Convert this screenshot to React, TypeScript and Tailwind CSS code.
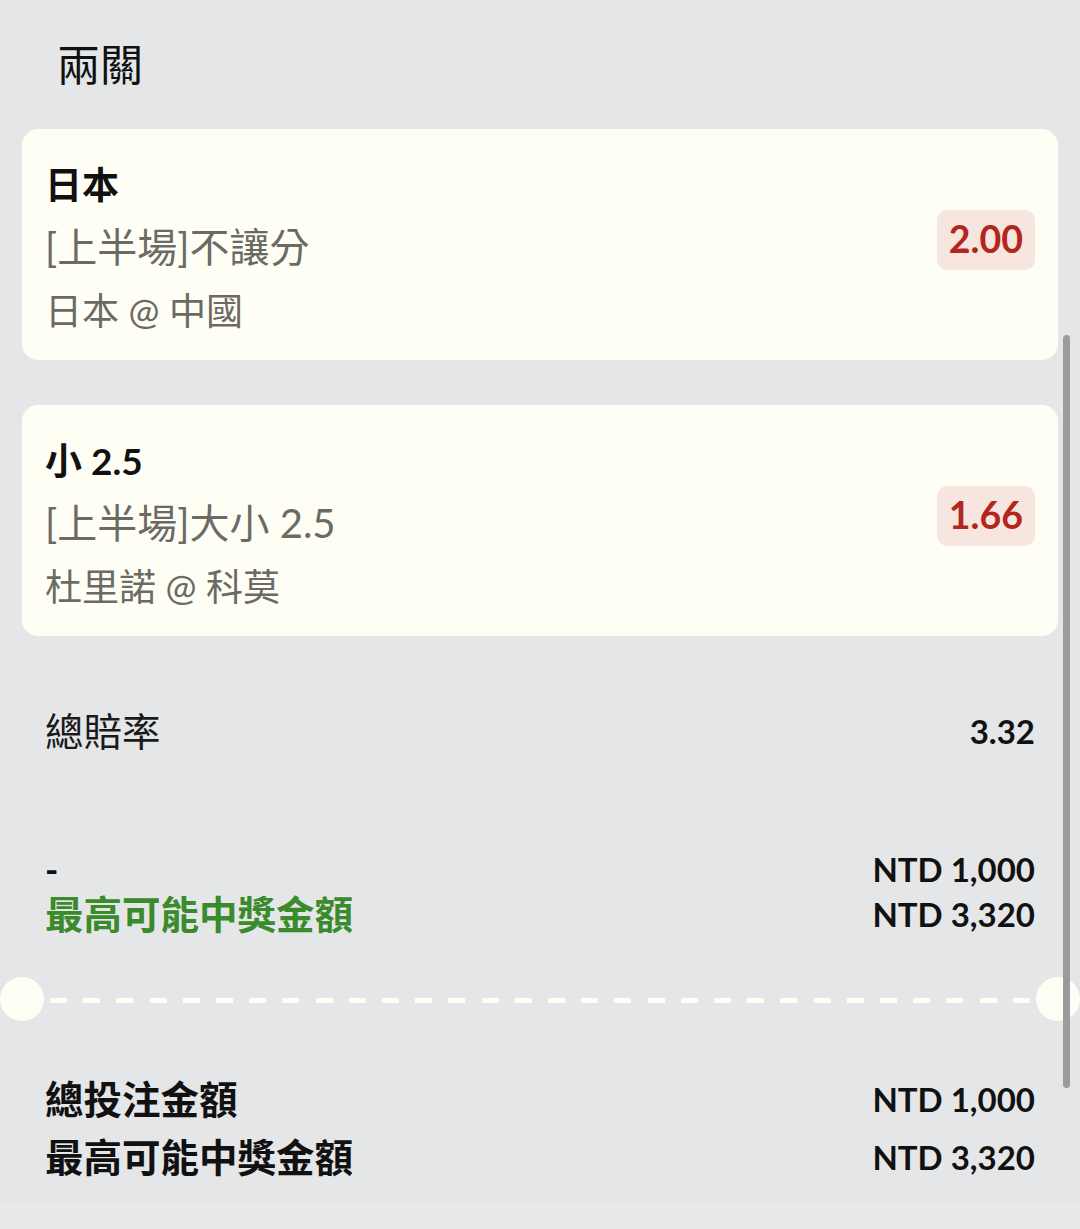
import React from "react";

const font = { fontFamily: 'Lato, "Noto Sans CJK TC", "Noto Sans", sans-serif' };

function BetCard({ title, market, teams, odds }: { title: string; market: string; teams: string; odds: string }) {
  return (
    <div className="mx-[22px] rounded-[16px] bg-[#fffef5] pl-[23px] pr-[23px] pt-[24px] pb-[18px] flex items-center justify-between">
      <div className="flex flex-col">
        <div className="text-[37px] leading-[63px] font-bold text-[#111111]">{title}</div>
        <div className="text-[40px] leading-[63px] text-[#6b6a64]">{market}</div>
        <div className="text-[37px] leading-[63px] text-[#6b6a64]">{teams}</div>
      </div>
      <div className="mb-[16px] h-[60px] px-[12px] rounded-[10px] bg-[#f7e6df] flex items-center text-[37.5px] font-bold text-[#b3261e]">
        {odds}
      </div>
    </div>
  );
}

export default function App() {
  const dashes = Array.from({ length: 30 });
  return (
    <div className="relative w-[1080px] h-[1229px] overflow-hidden bg-[#e5e6e8]" style={font}>
      <div className="pl-[57px] pt-[37px] h-[93px] text-[43px] leading-[56px] text-[#111111]">兩關</div>
      <div className="mt-[36px]">
        <BetCard title="日本" market="[上半場]不讓分" teams="日本 @ 中國" odds="2.00" />
      </div>
      <div className="mt-[45px]">
        <BetCard title="小 2.5" market="[上半場]大小 2.5" teams="杜里諾 @ 科莫" odds="1.66" />
      </div>

      <div className="mt-[71px] px-[45px] flex items-center justify-between h-[50px]">
        <div className="text-[38.5px] text-[#1a1a1a]">總賠率</div>
        <div className="text-[33px] font-bold text-[#111111]">3.32</div>
      </div>

      <div className="mt-[90px] px-[45px] flex justify-between">
        <div className="flex flex-col">
          <div className="text-[36px] leading-[45px] font-bold text-[#111111]">-</div>
          <div className="text-[38.5px] leading-[45px] font-bold text-[#3b8a2c]">最高可能中獎金額</div>
        </div>
        <div className="flex flex-col items-end">
          <div className="text-[33px] leading-[45px] font-bold text-[#111111]">NTD 1,000</div>
          <div className="text-[33px] leading-[45px] font-bold text-[#111111]">NTD 3,320</div>
        </div>
      </div>

      <div className="mt-[40px] h-[44px] flex items-center">
        <div className="w-[44px] h-[44px] rounded-full bg-[#fffef5] shrink-0" />
        <div className="flex-1 flex items-center justify-between px-[6px] mt-[3px]">
          {dashes.map((_, i) => (
            <div key={i} className="w-[17px] h-[5px] bg-[#fffef5]" />
          ))}
        </div>
        <div className="w-[44px] h-[44px] rounded-full bg-[#fffef5] shrink-0" />
      </div>

      <div className="mt-[49px] px-[45px] flex justify-between">
        <div className="flex flex-col">
          <div className="text-[38.5px] leading-[58px] font-bold text-[#111111]">總投注金額</div>
          <div className="text-[38.5px] leading-[58px] font-bold text-[#111111]">最高可能中獎金額</div>
        </div>
        <div className="flex flex-col items-end">
          <div className="text-[33px] leading-[58px] font-bold text-[#111111]">NTD 1,000</div>
          <div className="text-[33px] leading-[58px] font-bold text-[#111111]">NTD 3,320</div>
        </div>
      </div>

      <div className="absolute left-0 right-0 top-[1203px] bottom-0 bg-[#e8e9eb]" />
      <div className="absolute left-[1063px] top-[335px] w-[7px] h-[753px] rounded-full bg-[#9b9b9d]" />
    </div>
  );
}
